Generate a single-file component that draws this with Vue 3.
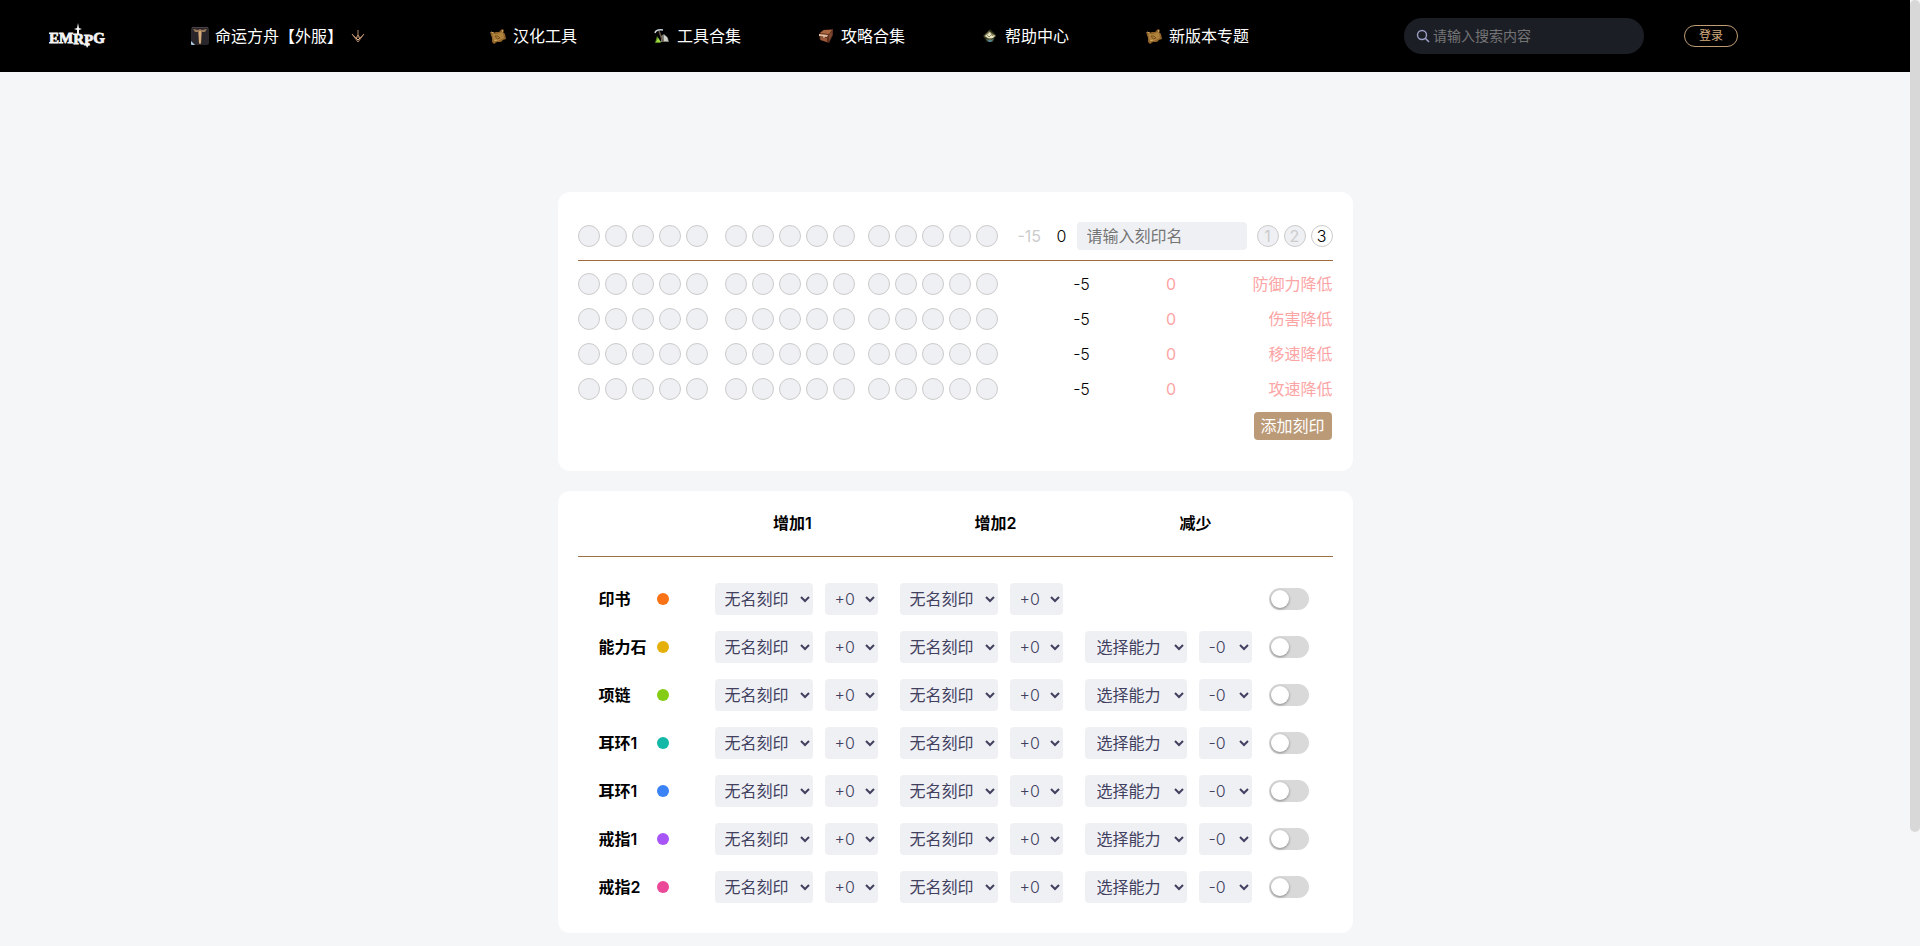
<script setup>
import { ref } from 'vue'

const navItems = [
  { label: '汉化工具', icon: 'map' },
  { label: '工具合集', icon: 'pick' },
  { label: '攻略合集', icon: 'book' },
  { label: '帮助中心', icon: 'gem' },
  { label: '新版本专题', icon: 'map' },
]

const penalties = ['防御力降低', '伤害降低', '移速降低', '攻速降低']

const level = ref(3)
const keyword = ref('')
const engraving = ref('')

const gear = [
  { label: '印书', color: '#f97316', reduce: false },
  { label: '能力石', color: '#e5b00b', reduce: true },
  { label: '项链', color: '#84cc16', reduce: true },
  { label: '耳环1', color: '#14b8a6', reduce: true },
  { label: '耳环1', color: '#3b82f6', reduce: true },
  { label: '戒指1', color: '#a855f7', reduce: true },
  { label: '戒指2', color: '#ec4899', reduce: true },
]
</script>

<template>
  <div class="page">
    <div class="content">
      <header class="topbar">
        <a class="logo" href="#" aria-label="EMRPG">
          <svg width="60" height="26" viewBox="0 0 60 26" aria-hidden="true">
            <text class="logo-text" x="0" y="20" font-size="15">EM<tspan dy="1">R</tspan><tspan dy="1">P</tspan><tspan dy="-2">G</tspan></text>
            <path d="M29 0 L30 5 L33 6 L30 7 L30 12 L28 12 L28 7 L25 6 L28 5 Z" fill="#f3f3f3" />
            <path d="M36 20 L41 20 L38 25 Z" fill="#f3f3f3" />
          </svg>
        </a>

        <button class="game" type="button">
          <svg width="18" height="18" viewBox="0 0 18 18" aria-hidden="true">
            <rect width="18" height="18" rx="2" fill="#29262b" />
            <path d="M1 0h16v1H1z" fill="#4a4045" />
            <path d="M2 2 7 3l2-1 2 1 5-1-2 3-3 0-1 12H8L7 5 4 5Z" fill="#9a7a58" />
            <path d="M8 4h2v12H8z" fill="#d3aa7c" />
            <path d="M0 14l4 4H1q-1 0-1-1z" fill="#a9cbe4" />
          </svg>
          <span>命运方舟【外服】</span>
          <svg class="down" width="14" height="14" viewBox="0 0 14 14" fill="none" stroke="#b58a67" aria-hidden="true">
            <path d="M7 1v8M1 5l6 8 6-8-4 4-2-3-2 3z" />
            <path d="M5 9l2 2 2-2" stroke="#dfb28b" />
          </svg>
        </button>

        <nav>
          <a v-for="item in navItems" :key="item.label" href="#">
            <svg v-if="item.icon === 'map'" width="16" height="16" viewBox="0 0 16 16" aria-hidden="true">
              <path d="M0 4l3 1 3-1 3 0 3-3 2 1-1 2 2 2 1 5-3 1-2 2-4 0-3 2-2-2 0-4z" fill="#8f6228" />
              <path d="M2 6l5 0 5-2 1 1 1 5-6 3-4 0z" fill="#ae813d" />
              <path d="M5 8l3 0 2 2-3 1z" fill="none" stroke="#755019" />
              <path d="M1 4l3 1M12 2l1 2M4 13l3-1" stroke="#d2aa60" />
            </svg>
            <svg v-else-if="item.icon === 'pick'" width="16" height="16" viewBox="0 0 16 16" aria-hidden="true">
              <path d="M7 14l0-6 3-2 4 4 1 4z" fill="#7d8078" />
              <path d="M10 13l0-6 3 2 1 4z" fill="#d1d1c8" />
              <path d="M1 15l2-7 2 3 2 4z" fill="#528b1e" />
              <path d="M2 14l2-4 3 4z" fill="#a6d546" />
              <path d="M5 3l4 11" stroke="#6b5849" stroke-width="1.5" />
              <path d="M1 5q1-4 8-3" fill="none" stroke="#c6d4dc" stroke-width="1.5" />
            </svg>
            <svg v-else-if="item.icon === 'book'" width="16" height="16" viewBox="0 0 16 16" aria-hidden="true">
              <path d="M1 6l4-4 10-1 0 6-4 8-9-3z" fill="#5f3020" />
              <path d="M2 5l4-3 8 0-3 4z" fill="#a9663f" />
              <path d="M1 6l9 1-1 2-8-1z" fill="#dfb99a" />
              <path d="M2 9l7 1 0 4-6-2z" fill="#9c583a" />
              <path d="M11 7l3-3 0 3-3 6z" fill="#7d462d" />
              <path d="M6 7l0 3" stroke="#f1d4b2" />
            </svg>
            <svg v-else width="16" height="16" viewBox="0 0 16 16" aria-hidden="true">
              <path d="M8 1l6 6-3 7H5L1 8z" fill="#2b2f18" />
              <path d="M2 8l5-5 7 5-6 4z" fill="#857f58" />
              <path d="M3 8l3-2 2-2 2 4 3-1-2 3H6z" fill="#e8e4c1" />
              <path d="M4 11l4 1 4-1-3 3H7z" fill="#55828b" />
              <path d="M5 7l2 2 3-3" fill="none" stroke="#8d8c68" />
            </svg>
            <span>{{ item.label }}</span>
          </a>
        </nav>

        <label class="search">
          <svg width="14" height="14" viewBox="0 0 14 14" fill="none" stroke="#9a9fc4" aria-hidden="true">
            <circle cx="6" cy="6" r="4.5" stroke-width="1.4" />
            <path d="M9 9l4 4" stroke-width="1.6" />
          </svg>
          <input v-model="keyword" type="text" placeholder="请输入搜索内容" aria-label="搜索" />
        </label>

        <button class="login" type="button">登录</button>
      </header>

      <main>
        <section class="card summary">
          <div class="line head">
            <div class="dots">
              <div v-for="g in 3" :key="g" class="group">
                <i v-for="n in 5" :key="n" class="dot"></i>
              </div>
            </div>
            <div class="head-tail">
              <span class="muted">-15</span>
              <span class="figure">0</span>
              <input v-model="engraving" class="name" type="text" placeholder="请输入刻印名" aria-label="刻印名" />
              <div class="levels">
                <button v-for="n in 3" :key="n" type="button" class="dot level" :class="{ active: level === n }" @click="level = n">{{ n }}</button>
              </div>
            </div>
          </div>
          <div class="lines">
            <div v-for="name in penalties" :key="name" class="line">
              <div class="dots">
                <div v-for="g in 3" :key="g" class="group">
                  <i v-for="n in 5" :key="n" class="dot"></i>
                </div>
              </div>
              <div class="line-tail">
                <span class="figure">-5</span>
                <span class="bad">0</span>
                <span class="bad title">{{ name }}</span>
              </div>
            </div>
          </div>
          <button class="add" type="button">添加刻印</button>
        </section>

        <section class="card gear">
          <div class="gear-head">
            <span></span>
            <span>增加1</span>
            <span>增加2</span>
            <span>减少</span>
          </div>
          <div v-for="(item, i) in gear" :key="i" class="gear-row">
            <span class="gear-name">{{ item.label }}</span>
            <i class="mark" :style="{ background: item.color }"></i>
            <div v-for="n in 2" :key="n" class="pair">
              <select :aria-label="`${item.label} 增加${n}`"><option>无名刻印</option></select>
              <select class="num" :aria-label="`${item.label} 增加${n} 数值`"><option>+0</option></select>
            </div>
            <div class="pair reduce">
              <template v-if="item.reduce">
                <select class="ability" :aria-label="`${item.label} 减少`"><option>选择能力</option></select>
                <select class="num" :aria-label="`${item.label} 减少数值`"><option>-0</option></select>
              </template>
            </div>
            <input class="switch" type="checkbox" role="switch" :aria-label="`${item.label} 开关`" />
          </div>
        </section>
      </main>
    </div>
    <div class="track" aria-hidden="true"><div class="thumb"></div></div>
  </div>
</template>

<style>
body {
  margin: 0;
  background: #f5f6f8;
}
</style>

<style scoped>
.page {
  display: flex;
  min-height: 100vh;
  background: #f5f6f8;
  color: #000;
  font-family: Inter, "Noto Sans CJK SC", sans-serif;
  font-size: 16px;
  line-height: 24px;
}
.page *,
.page {
  box-sizing: border-box;
}
button,
input,
select {
  font: inherit;
  color: inherit;
  border: 0;
  margin: 0;
}
button {
  padding: 0;
  cursor: pointer;
}
.content {
  flex: 1;
  min-width: 0;
}
.track {
  width: 10px;
}
.thumb {
  height: 88vh;
  border-radius: 5px;
  background: #d8d8d8;
}

.topbar {
  display: flex;
  align-items: center;
  height: 72px;
  padding-left: 49px;
  background: #000;
  color: #fff;
}
.logo {
  width: 142px;
  height: 26px;
}
.logo-text {
  fill: #f3f3f3;
  stroke: #f3f3f3;
  stroke-width: 0.8px;
  font-family: "Liberation Serif", serif;
  font-weight: 700;
}
.game {
  display: flex;
  align-items: center;
  gap: 6px;
  width: 299px;
  background: none;
}
.down {
  margin-left: 2px;
}
nav {
  display: flex;
}
nav a {
  display: flex;
  align-items: center;
  gap: 7px;
  width: 164px;
  color: #fff;
  text-decoration: none;
}
.search {
  display: flex;
  align-items: center;
  gap: 3px;
  width: 240px;
  height: 36px;
  margin-left: 94px;
  padding: 0 12px;
  border-radius: 18px;
  background: #1c1e26;
}
.search input {
  flex: 1;
  min-width: 0;
  padding: 0;
  background: none;
  color: #fff;
  font-size: 14px;
  outline: 0;
}
input::placeholder {
  color: #757575;
}
.login {
  width: 54px;
  height: 22px;
  margin-left: 40px;
  border: 1px solid #c09c74;
  border-radius: 11px;
  background: none;
  color: #d3ab7e;
  font-size: 12px;
  line-height: 20px;
}

main {
  display: flex;
  flex-direction: column;
  gap: 20px;
  max-width: 795px;
  margin: 120px auto 0;
  padding-bottom: 13px;
}
.card {
  padding: 30px 20px;
  border-radius: 12px;
  background: #fff;
}

.line {
  display: grid;
  grid-template-columns: 420px 1fr;
  align-items: center;
}
.head {
  padding-bottom: 10px;
  border-bottom: 1px solid #9f6a3e;
}
.dots {
  display: flex;
  gap: 13px;
}
.group {
  display: flex;
  gap: 5px;
}
.group:first-child {
  margin-right: 4px;
}
.dot {
  display: block;
  width: 22px;
  height: 22px;
  border: 1px solid #cbcbcb;
  border-radius: 50%;
  background: #eff0f4;
}
.head-tail {
  display: grid;
  grid-template-columns: 39px 20px 180px 76px;
  align-items: center;
  padding-left: 20px;
}
.figure {
  font-weight: 300;
}
.muted {
  color: #ccc;
}
.name {
  width: 170px;
  height: 28px;
  padding: 0 10px;
  border-radius: 4px;
  background: #eff0f4;
}
.levels {
  display: flex;
  gap: 5px;
}
.level {
  color: #ccc;
  line-height: 20px;
}
.level.active {
  background: #fff;
  color: #000;
  font-weight: 300;
}
.lines {
  display: grid;
  gap: 11px;
  margin-top: 11px;
}
.line-tail {
  display: grid;
  grid-template-columns: 92px 87px 1fr;
  padding-left: 38px;
  text-align: center;
}
.bad {
  color: #fca5a5;
}
.title {
  text-align: right;
}
.add {
  display: block;
  width: 78px;
  height: 28px;
  margin: 11px 1px 1px auto;
  border-radius: 4px;
  background: #bb9a77;
  color: #fff;
}

.gear {
  padding-top: 20px;
}
.gear-head {
  display: grid;
  grid-template-columns: 114px 202px 204px 196px;
  margin-bottom: 26px;
  padding-bottom: 21px;
  border-bottom: 1px solid #9c7046;
  font-weight: 600;
  text-align: center;
}
.gear-row {
  display: flex;
  align-items: center;
  height: 32px;
  padding-left: 21px;
}
.gear-row + .gear-row {
  margin-top: 16px;
}
.gear-name {
  width: 58px;
  font-weight: 600;
}
.mark {
  width: 12px;
  height: 12px;
  margin-right: 46px;
  border-radius: 50%;
}
.pair {
  display: flex;
  gap: 12px;
  margin-right: 22px;
}
.reduce {
  width: 167px;
  margin-right: 17px;
}
select {
  width: 98px;
  height: 32px;
  padding: 0 0 0 6px;
  border-radius: 4px;
  background: #eff0f4;
  color: #41415f;
}
.num {
  width: 53px;
  font-weight: 300;
}
.ability {
  width: 102px;
  padding-left: 8px;
}
.switch {
  appearance: none;
  display: flex;
  align-items: center;
  width: 40px;
  height: 22px;
  padding: 2px;
  border-radius: 11px;
  background: #d9d9d9;
}
.switch::before {
  content: "";
  width: 18px;
  height: 18px;
  border-radius: 50%;
  background: #fff;
  box-shadow: 0 1px 3px rgba(0, 0, 0, 0.4);
}
.switch:checked {
  justify-content: flex-end;
  background: #bb9a77;
}
</style>
